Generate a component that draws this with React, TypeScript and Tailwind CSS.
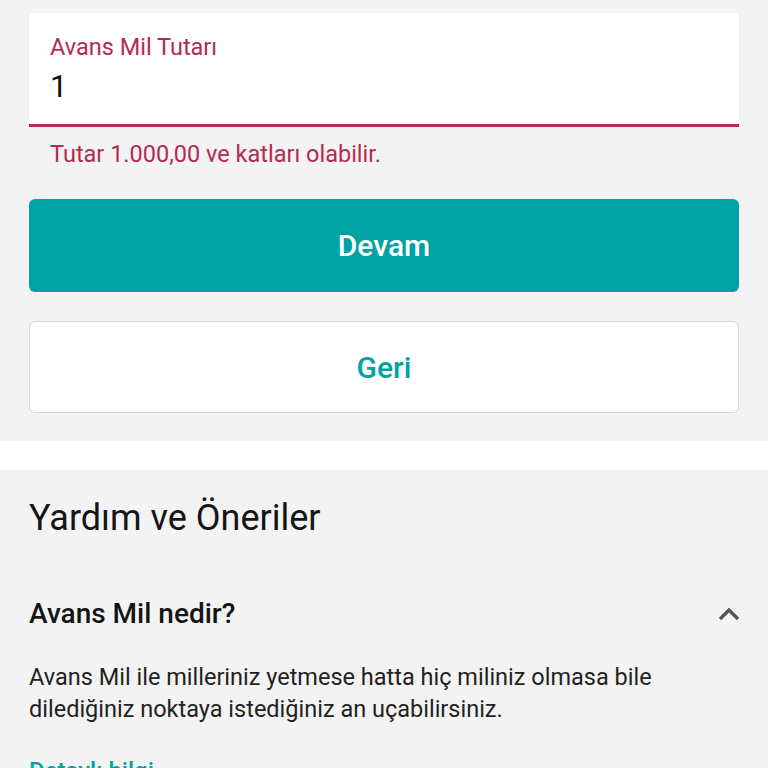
import React from "react";

export default function App() {
  const font = { fontFamily: "Roboto, 'Liberation Sans', sans-serif" };
  return (
    <div className="w-[768px] min-h-[768px] bg-[#f3f3f3] overflow-hidden" style={font}>
      <div className="px-[29px] pt-[13px] pb-[28px]">
        <div className="bg-white border-b-[3px] border-[#b52a4f] h-[114px] px-[21px] pt-[20px]">
          <div className="text-[23.5px] leading-[28px] text-[#b52a4f]">Avans Mil Tutarı</div>
          <div className="text-[31px] leading-[36px] text-[#111] mt-[8px]">1</div>
        </div>
        <div className="text-[23.5px] leading-[28px] text-[#b52a4f] pl-[21px] mt-[13px]">
          Tutar 1.000,00 ve katları olabilir.
        </div>
        <button className="mt-[31px] w-full h-[93px] rounded-[6px] bg-[#00a3a1] text-white text-[30px] font-medium flex items-center justify-center">
          Devam
        </button>
        <button className="mt-[29px] w-full h-[92px] rounded-[6px] bg-white border border-[#d6d6d6] text-[#00a3a1] text-[30px] font-medium flex items-center justify-center">
          Geri
        </button>
      </div>
      <div className="h-[29px] bg-white" />
      <div className="px-[29px] pt-[27px]">
        <h2 className="text-[36px] leading-[42px] text-[#151515]">Yardım ve Öneriler</h2>
        <div className="mt-[59px] flex items-center justify-between">
          <div className="text-[28px] leading-[32px] font-medium text-[#151515]">Avans Mil nedir?</div>
          <svg width="24" height="16" viewBox="0 0 24 16" className="mr-[-2px]">
            <path d="M3 13 L12 4 L21 13" fill="none" stroke="#555" strokeWidth="3.2" />
          </svg>
        </div>
        <p className="mt-[31px] text-[23.5px] leading-[32px] text-[#222]">
          Avans Mil ile milleriniz yetmese hatta hiç miliniz olmasa bile
          <br />
          dilediğiniz noktaya istediğiniz an uçabilirsiniz.
        </p>
        <div className="mt-[30px] text-[24px] leading-[32px] text-[#00a3a1] font-medium">Detaylı bilgi</div>
      </div>
    </div>
  );
}
